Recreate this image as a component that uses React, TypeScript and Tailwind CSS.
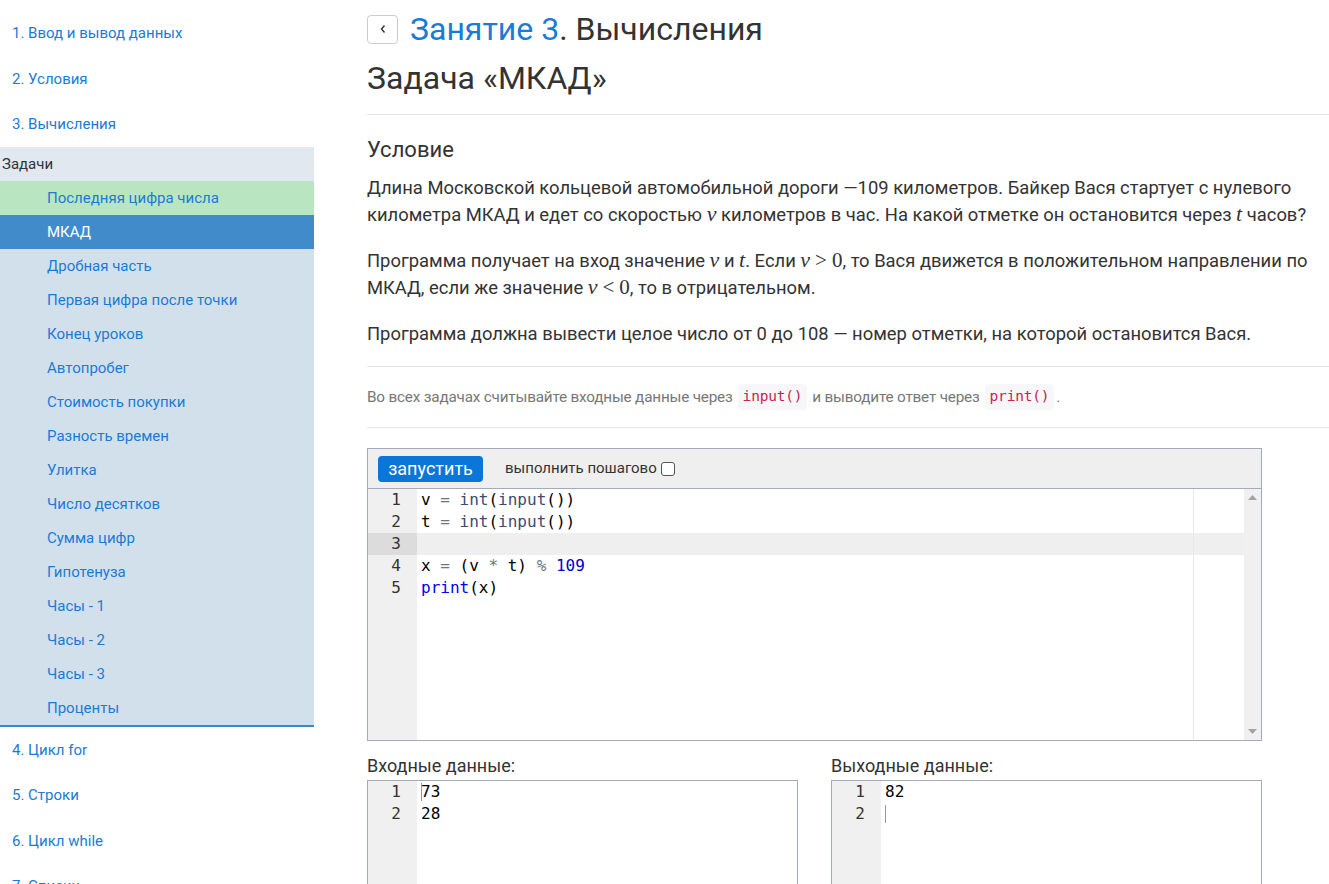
import React from 'react';

const sans = "font-['Roboto','Liberation_Sans',sans-serif]";
const mono = "font-['DejaVu_Sans_Mono','Liberation_Mono',monospace]";

const chapters = ['1. Ввод и вывод данных', '2. Условия', '3. Вычисления'];
const chaptersAfter = ['4. Цикл for', '5. Строки', '6. Цикл while', '7. Списки'];
const tasks = [
  'Последняя цифра числа',
  'МКАД',
  'Дробная часть',
  'Первая цифра после точки',
  'Конец уроков',
  'Автопробег',
  'Стоимость покупки',
  'Разность времен',
  'Улитка',
  'Число десятков',
  'Сумма цифр',
  'Гипотенуза',
  'Часы - 1',
  'Часы - 2',
  'Часы - 3',
  'Проценты',
];

// math bits, roughly like KaTeX
const M = ({ children }: { children: React.ReactNode }) => (
  <span className="font-['Liberation_Serif','DejaVu_Serif',serif] text-[22px] italic leading-none">{children}</span>
);
const R = ({ children }: { children: React.ReactNode }) => (
  <span className="font-['Liberation_Serif','DejaVu_Serif',serif] text-[21px] leading-none">{children}</span>
);

const Sidebar = () => (
  <aside className={`w-[314px] shrink-0 text-[15px] ${sans}`}>
    <div className="pt-[11px]">
      {chapters.map((c) => (
        <div key={c} className="h-[45.4px] flex items-center pl-[12px] text-[#1a7bd6]">
          {c}
        </div>
      ))}
    </div>
    <div className="border-b-2 border-[#3d87c8]">
      <div className="h-[34px] flex items-center pl-[2px] bg-[#e2e8ef] text-[#333]">Задачи</div>
      {tasks.map((t, i) => (
        <div
          key={t}
          className={
            'h-[34px] flex items-center pl-[47px] ' +
            (i === 0
              ? 'bg-[#b9e6c1] text-[#1a7bd6]'
              : i === 1
                ? 'bg-[#428bca] text-white'
                : 'bg-[#d2e0eb] text-[#1a7bd6]')
          }
        >
          {t}
        </div>
      ))}
    </div>
    {chaptersAfter.map((c) => (
      <div key={c} className="h-[45.5px] flex items-center pl-[12px] text-[#1a7bd6]">
        {c}
      </div>
    ))}
  </aside>
);

type Tok = [string, string];
const codeLines: Tok[][] = [
  [['v', 'text-black'], [' = ', 'text-[#687687]'], ['int', 'text-[#3c4c72]'], ['(', 'text-black'], ['input', 'text-[#3c4c72]'], ['())', 'text-black']],
  [['t', 'text-black'], [' = ', 'text-[#687687]'], ['int', 'text-[#3c4c72]'], ['(', 'text-black'], ['input', 'text-[#3c4c72]'], ['())', 'text-black']],
  [],
  [['x', 'text-black'], [' = ', 'text-[#687687]'], ['(v ', 'text-black'], ['*', 'text-[#687687]'], [' t) ', 'text-black'], ['%', 'text-[#687687]'], [' ', ''], ['109', 'text-[#0000cd]']],
  [['print', 'text-[#0000ff]'], ['(x)', 'text-black']],
];

const Editor = () => (
  <div className={`w-[895px] h-[293px] border border-[#a3abbb] flex flex-col ${sans}`}>
    <div className="h-[40px] shrink-0 bg-[#efefef] border-b border-[#a3abbb] flex items-center pl-[10px]">
      <button className="h-[26px] w-[105px] rounded-[4px] bg-[#0b75d8] text-white text-[18px] leading-none">
        запустить
      </button>
      <span className="ml-[22px] text-[15px] text-[#333]">выполнить пошагово</span>
      <span className="ml-[4px] w-[14px] h-[14px] border border-[#555] rounded-[3px] bg-white" />
    </div>
    <div className={`flex-1 flex ${mono} text-[16px]`}>
      <div className="w-[49px] bg-[#f0f0f0]">
        {codeLines.map((_, i) => (
          <div key={i} className={`h-[22px] leading-[22px] text-right pr-[16px] text-[#333] ${i === 2 ? 'bg-[#dcdcdc]' : ''}`}>
            {i + 1}
          </div>
        ))}
      </div>
      <div className="flex-1 flex">
        <div className="flex-1 relative">
          <div className="absolute top-0 bottom-0 left-[776px] w-px bg-[#e8e8e8]" />
          {codeLines.map((line, i) => (
            <div key={i} className={`h-[22px] leading-[22px] pl-[4px] whitespace-pre ${i === 2 ? 'bg-[#efefef]' : ''}`}>
              {line.map(([s, c], j) => (
                <span key={j} className={c}>
                  {s}
                </span>
              ))}
            </div>
          ))}
        </div>
        <div className="w-[17px] bg-[#f0f0f0] flex flex-col items-center justify-between py-[6px]">
          <svg width="9" height="5" viewBox="0 0 9 5">
            <path d="M0 5 L4.5 0 L9 5 Z" fill="#a3a3a3" />
          </svg>
          <svg width="9" height="5" viewBox="0 0 9 5">
            <path d="M0 0 L4.5 5 L9 0 Z" fill="#a3a3a3" />
          </svg>
        </div>
      </div>
    </div>
  </div>
);

const DataBox = ({ title, lines, cursorLine }: { title: string; lines: string[]; cursorLine: number }) => (
  <div className="w-[431px]">
    <div className="text-[18px] text-[#333] h-[28px] leading-[28px]">{title}</div>
    <div className={`h-[120px] border border-[#a3abbb] border-b-0 flex ${mono} text-[16px]`}>
      <div className="w-[49px] bg-[#f0f0f0]">
        {lines.map((_, i) => (
          <div key={i} className="h-[22px] leading-[22px] text-right pr-[16px] text-[#333]">
            {i + 1}
          </div>
        ))}
      </div>
      <div className="flex-1">
        {lines.map((l, i) => (
          <div key={i} className="h-[22px] leading-[22px] pl-[4px] text-black relative">
            {i === cursorLine && <span className="absolute left-[4px] top-[2px] w-px h-[18px] bg-[#999]" />}
            {l}
          </div>
        ))}
      </div>
    </div>
  </div>
);

export default function App() {
  return (
    <div className={`flex w-[1329px] h-[884px] overflow-hidden bg-white ${sans}`}>
      <Sidebar />
      <main className="ml-[53px] flex-1 pt-[12px] text-[#333]">
        <div className="h-[34px] flex items-center">
          <div className="w-[31px] h-[29px] border border-[#ccc] rounded-[4px] flex items-center justify-center">
            <svg width="8" height="10" viewBox="0 0 8 10">
              <path d="M5.5 1.5 L2.5 5 L5.5 8.5" fill="none" stroke="#333" strokeWidth="1.4" />
            </svg>
          </div>
          <h1 className="ml-[12px] text-[32px] leading-none">
            <span className="text-[#1a7bd6]">Занятие 3</span>. Вычисления
          </h1>
        </div>
        <h2 className="mt-[12px] text-[32px] leading-[40px]">Задача «МКАД»</h2>
        <hr className="mt-[16px] border-t border-[#e5e5e5]" />
        <h3 className="mt-[21px] text-[22px] leading-[28px]">Условие</h3>
        <div className="mt-[9.5px] text-[18.4px] leading-[27px]">
          <p className="whitespace-nowrap">
            Длина Московской кольцевой автомобильной дороги —109 километров. Байкер Вася стартует с нулевого
            <br />
            километра МКАД и едет со скоростью <M>v</M> километров в час. На какой отметке он остановится через <M>t</M> часов?
          </p>
          <p className="mt-[19px] whitespace-nowrap">
            Программа получает на вход значение <M>v</M> и <M>t</M>. Если <M>v</M>
            <span className="mx-[5px]">
              <R>&gt;</R>
            </span>
            <R>0</R>, то Вася движется в положительном направлении по
            <br />
            МКАД, если же значение <M>v</M>
            <span className="mx-[5px]">
              <R>&lt;</R>
            </span>
            <R>0</R>, то в отрицательном.
          </p>
          <p className="mt-[19px]">Программа должна вывести целое число от 0 до 108 — номер отметки, на которой остановится Вася.</p>
        </div>
        <hr className="mt-[19.5px] border-t border-[#e5e5e5]" />
        <div className="mt-[20px] h-[20px] flex items-center text-[15.3px] text-[#777] tracking-[-0.2px]">
          Во всех задачах считывайте входные данные через
          <code className={`mx-[5px] px-[5px] py-[2px] rounded-[4px] bg-[#f7f7f9] text-[#c7254e] text-[14.5px] ${mono}`}>input()</code>
          и выводите ответ через
          <code className={`ml-[5px] mr-[2px] px-[5px] py-[2px] rounded-[4px] bg-[#f7f7f9] text-[#c7254e] text-[14.5px] ${mono}`}>print()</code>.
        </div>
        <hr className="mt-[20px] border-t border-[#e5e5e5]" />
        <div className="mt-[20px]">
          <Editor />
        </div>
        <div className="mt-[11px] flex gap-[33px]">
          <DataBox title="Входные данные:" lines={['73', '28']} cursorLine={0} />
          <DataBox title="Выходные данные:" lines={['82', '']} cursorLine={1} />
        </div>
      </main>
    </div>
  );
}
